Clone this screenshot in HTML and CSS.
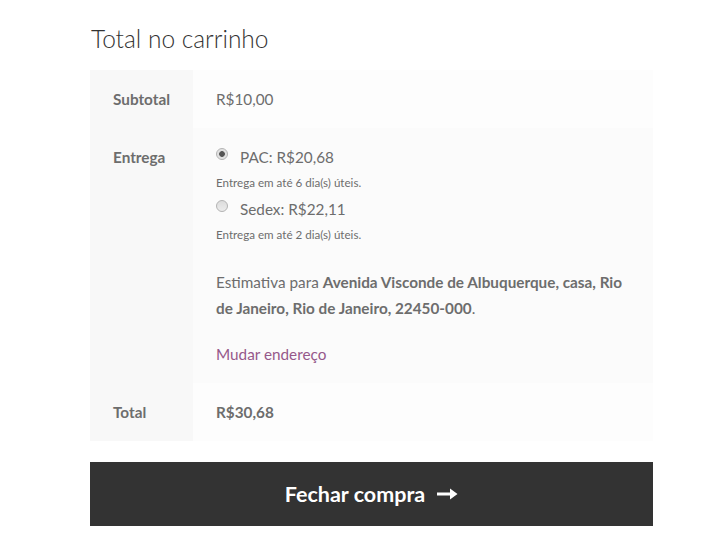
FILE: index.html
```html
<!DOCTYPE html>
<html lang="pt-BR">
<head>
<meta charset="utf-8">
<title>Total no carrinho</title>
<link rel="stylesheet" href="styles.css">
</head>
<body>
<div class="cart-totals">
  <h2 class="title">Total no carrinho</h2>
  <table class="totals">
    <tbody>
      <tr class="row-odd">
        <th>Subtotal</th>
        <td>R$10,00</td>
      </tr>
      <tr class="row-even">
        <th>Entrega</th>
        <td>
          <ul class="methods">
            <li>
              <label class="method"><input type="radio" name="ship" class="radio" checked> <span>PAC: R$20,68</span></label>
              <p class="delivery">Entrega em até 6 dia(s) úteis.</p>
            </li>
            <li>
              <label class="method"><input type="radio" name="ship" class="radio"> <span>Sedex: R$22,11</span></label>
              <p class="delivery">Entrega em até 2 dia(s) úteis.</p>
            </li>
          </ul>
          <p class="destination">Estimativa para <strong>Avenida Visconde de Albuquerque, casa, Rio de Janeiro, Rio de Janeiro, 22450-000</strong>.</p>
          <p class="change"><a href="#" class="change-link">Mudar endereço</a></p>
        </td>
      </tr>
      <tr class="row-odd">
        <th>Total</th>
        <td><strong>R$30,68</strong></td>
      </tr>
    </tbody>
  </table>
  <a href="#" class="checkout-button">Fechar compra <svg class="arrow" width="21" height="12" viewBox="0 0 21 12"><path d="M0 4.5h13V0.5L20.5 6 13 11.5V7.5H0z" fill="#fff"/></svg></a>
</div>
</body>
</html>
```

FILE: styles.css
```css
html, body {
  margin: 0;
  padding: 0;
  background: #fff;
}

body {
  font-family: Lato, "Liberation Sans", sans-serif;
  font-size: 15.3px;
  color: #6d6d6d;
}

.cart-totals {
  width: 563px;
  margin-left: 90px;
  padding-top: 23px;
}

.title {
  margin: 0 0 15px 1px;
  font-size: 24.5px;
  font-weight: 300;
  line-height: 32px;
  color: #333;
}

.totals {
  width: 100%;
  border-collapse: collapse;
  border-spacing: 0;
}

.totals th,
.totals td {
  padding: 16px 23px;
  line-height: 26px;
  vertical-align: top;
  text-align: left;
}

.totals th {
  width: 57px;
  font-weight: 700;
  background: #f8f8f8;
}

.row-odd td {
  background: #fdfdfd;
}

.row-even td {
  background: #fbfbfb;
}

.row-even th {
  background: #f8f8f8;
}

.methods {
  list-style: none;
  margin: 0 0 21px;
  padding: 0;
}

.method {
  display: flex;
  align-items: center;
  height: 26px;
}

.method span {
  margin-left: 12px;
}

.radio {
  appearance: none;
  -webkit-appearance: none;
  width: 12px;
  height: 12px;
  margin: 0;
  border: 1px solid #b4b4b4;
  border-radius: 50%;
  background: linear-gradient(#dcdcdc, #ececec);
  position: relative;
  top: -3px;
}

.radio:checked {
  background: radial-gradient(circle, #555 0, #555 2.5px, #dedede 3.2px, #ececec 100%);
}

.delivery {
  margin: 0;
  font-size: 11.6px;
  line-height: 26px;
}

.destination {
  margin: 0 0 20px;
}

.destination strong {
  font-weight: 700;
}

.change {
  margin: 0;
}

.change-link {
  color: #96588a;
  text-decoration: none;
}

.totals strong {
  font-weight: 700;
}

.checkout-button {
  display: flex;
  align-items: center;
  justify-content: center;
  gap: 12px;
  height: 64px;
  margin-top: 21px;
  background: #333;
  color: #fff;
  font-size: 21.5px;
  font-weight: 700;
  text-decoration: none;
}

.arrow {
  display: block;
}
```
